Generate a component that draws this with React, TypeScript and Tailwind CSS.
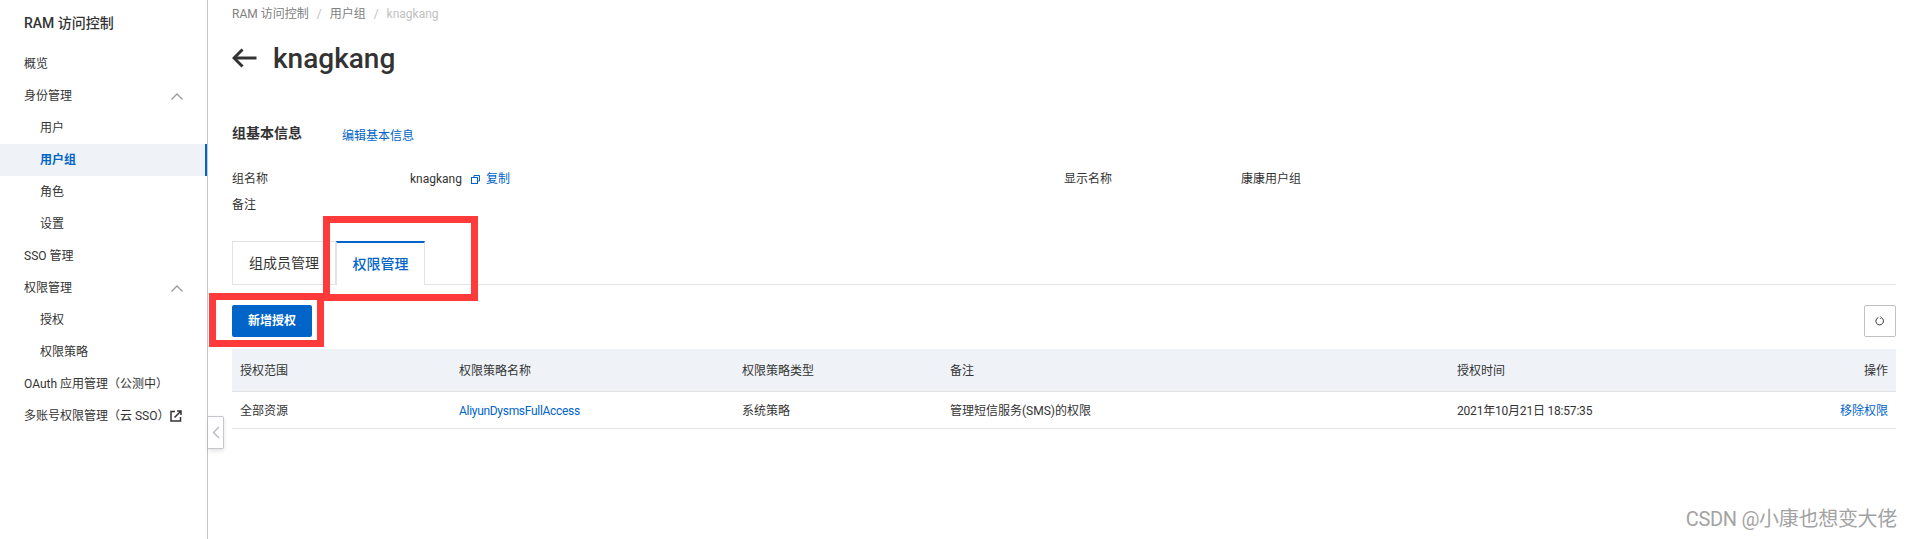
import React from "react";

const Chevron = () => (
  <svg width="12" height="7" viewBox="0 0 12 7" fill="none" stroke="#9a9a9a" strokeWidth="1.3">
    <path d="M0.5 6.5 L6 1 L11.5 6.5" />
  </svg>
);

const NavItem = ({ label, sub, active, chevron, children }: { label: string; sub?: boolean; active?: boolean; chevron?: boolean; children?: React.ReactNode }) => (
  <div
    className={`flex h-8 items-center text-xs ${sub ? "pl-10" : "pl-6"} pr-6 ${
      active ? "bg-[#eff3f8] font-bold text-[#0064c8] border-r-2 border-[#0064c8]" : "text-[#333333]"
    }`}
  >
    <span className="whitespace-nowrap">{label}</span>
    {children}
    {chevron && (
      <span className="ml-auto flex">
        <Chevron />
      </span>
    )}
  </div>
);

const cols = "grid grid-cols-[219px_283px_208px_507px_1fr] px-2";

export default function App() {
  return (
    <div className="relative flex h-[539px] w-[1913px] overflow-hidden bg-white font-['Roboto','Noto_Sans_CJK_SC',sans-serif] text-[#333333]">
      <aside className="flex w-[208px] shrink-0 flex-col border-r border-[#c4c6cc]">
        <div className="flex h-[48px] items-center pb-[2px] pl-6 text-sm font-medium text-[#333333]">RAM 访问控制</div>
        <div className="flex flex-col">
          <NavItem label="概览" />
          <NavItem label="身份管理" chevron />
          <NavItem label="用户" sub />
          <NavItem label="用户组" sub active />
          <NavItem label="角色" sub />
          <NavItem label="设置" sub />
          <NavItem label="SSO 管理" />
          <NavItem label="权限管理" chevron />
          <NavItem label="授权" sub />
          <NavItem label="权限策略" sub />
          <NavItem label="OAuth 应用管理（公测中）" />
          <NavItem label="多账号权限管理（云 SSO）">
            <svg className="ml-[1px]" width="12" height="12" viewBox="0 0 12 12" fill="none" stroke="#333333" strokeWidth="1.5">
              <path d="M5 1.5 H1 V11 H10.5 V7" />
              <path d="M4.5 7.5 L10.5 1.5 M7 1 H11 V5" />
            </svg>
          </NavItem>
        </div>
      </aside>

      <main className="flex min-w-0 flex-1 flex-col pl-6 pr-[17px]">
        <div className="flex h-7 items-center text-xs text-[#808080]">
          <span>RAM 访问控制</span>
          <span className="mx-2 text-[#c1c1c1]">/</span>
          <span>用户组</span>
          <span className="mx-2 text-[#c1c1c1]">/</span>
          <span className="text-[#c1c1c1]">knagkang</span>
        </div>

        <div className="mt-[10px] flex h-10 items-center">
          <svg width="25" height="20" viewBox="0 0 25 20" fill="none" stroke="#333333" strokeWidth="3">
            <path d="M24.5 10 H2" />
            <path d="M10.5 1.5 L2 10 L10.5 18.5" />
          </svg>
          <h1 className="ml-[16px] mt-[1px] text-[28px] font-medium text-[#333333]">knagkang</h1>
        </div>

        <div className="mt-[43px] flex h-6 items-center">
          <span className="w-[110px] text-sm font-bold">组基本信息</span>
          <a className="mt-[5px] text-xs text-[#0064c8]">编辑基本信息</a>
        </div>

        <div className="mt-5 grid grid-cols-[178px_654px_177px_1fr] pt-[1px] text-xs">
          <div className="flex h-[26px] items-center">组名称</div>
          <div className="flex h-[26px] items-center">
            <span>knagkang</span>
            <svg className="ml-[9px]" width="9" height="9" viewBox="0 0 9 9" fill="none" stroke="#0064c8" strokeWidth="1">
              <path d="M3 2.5 V0.5 H8.5 V6 H6.5" />
              <rect x="0.5" y="2.5" width="6" height="6" />
            </svg>
            <a className="ml-[6px] text-[#0064c8]">复制</a>
          </div>
          <div className="flex h-[26px] items-center">显示名称</div>
          <div className="flex h-[26px] items-center">康康用户组</div>
          <div className="flex h-[26px] items-center">备注</div>
        </div>

        <div className="mt-[23px] flex h-[44px] border-b border-[#e3e3e3]">
          <div className="flex h-[44px] w-[104px] items-center justify-center border border-[#e3e3e3] text-sm">组成员管理</div>
          <div className="z-10 flex h-[44px] w-[89px] items-center justify-center border-x border-t-2 border-x-[#e3e3e3] border-t-[#0064c8] bg-white text-sm font-medium text-[#0064c8]">权限管理</div>
        </div>

        <div className="mt-5 flex items-center justify-between">
          <button className="h-8 w-20 rounded-[2px] bg-[#0064c8] text-xs font-bold text-white">新增授权</button>
          <button className="flex h-8 w-8 items-center justify-center rounded-[2px] border border-[#c1c1c1] bg-white">
            <svg width="10" height="10" viewBox="0 0 10 10" fill="none" stroke="#333333" strokeWidth="1">
              <path d="M6.2 1.6 A3.8 3.8 0 1 1 3.4 1.5" />
              <path d="M5.2 0.4 L6.4 1.6 L5.2 2.8" strokeWidth="0.8" />
            </svg>
          </button>
        </div>

        <div className="mt-3 text-xs">
          <div className={`${cols} h-[43px] items-center border-b border-[#e3e3e3] bg-[#eff3f8] pt-[1px]`}>
            <span>授权范围</span>
            <span>权限策略名称</span>
            <span>权限策略类型</span>
            <span>备注</span>
            <span className="flex justify-between">
              <span>授权时间</span>
              <span>操作</span>
            </span>
          </div>
          <div className={`${cols} h-[37px] items-center border-b border-[#e3e3e3] pt-[2px]`}>
            <span>全部资源</span>
            <a className="tracking-[-0.3px] text-[#0064c8]">AliyunDysmsFullAccess</a>
            <span>系统策略</span>
            <span>管理短信服务(SMS)的权限</span>
            <span className="flex justify-between">
              <span className="tracking-[-0.2px]">2021年10月21日 18:57:35</span>
              <a className="text-[#0064c8]">移除权限</a>
            </span>
          </div>
        </div>
      </main>

      {/* sidebar collapse handle */}
      <div className="absolute left-[208px] top-[416px] flex h-[33px] w-[16px] items-center justify-center rounded-r-[2px] border border-l-0 border-[#c4c6cc] bg-white shadow-[0_2px_4px_rgba(0,0,0,0.12)]">
        <svg width="8" height="13" viewBox="0 0 8 13" fill="none" stroke="#b5b8c0" strokeWidth="1.4">
          <path d="M7 1 L1.5 6.5 L7 12" />
        </svg>
      </div>

      {/* red annotation boxes */}
      <div className="pointer-events-none absolute left-[323px] top-[216px] h-[85px] w-[155px] border-[7px] border-[#ff3a3a]" />
      <div className="pointer-events-none absolute left-[209px] top-[293px] h-[54px] w-[115px] border-[7px] border-[#ff3a3a]" />

      {/* watermark */}
      <div className="absolute right-[16px] top-[505px] whitespace-nowrap text-[20px] leading-7 tracking-[-0.3px] text-[#a3a3a3]">CSDN @小康也想变大佬</div>
    </div>
  );
}
